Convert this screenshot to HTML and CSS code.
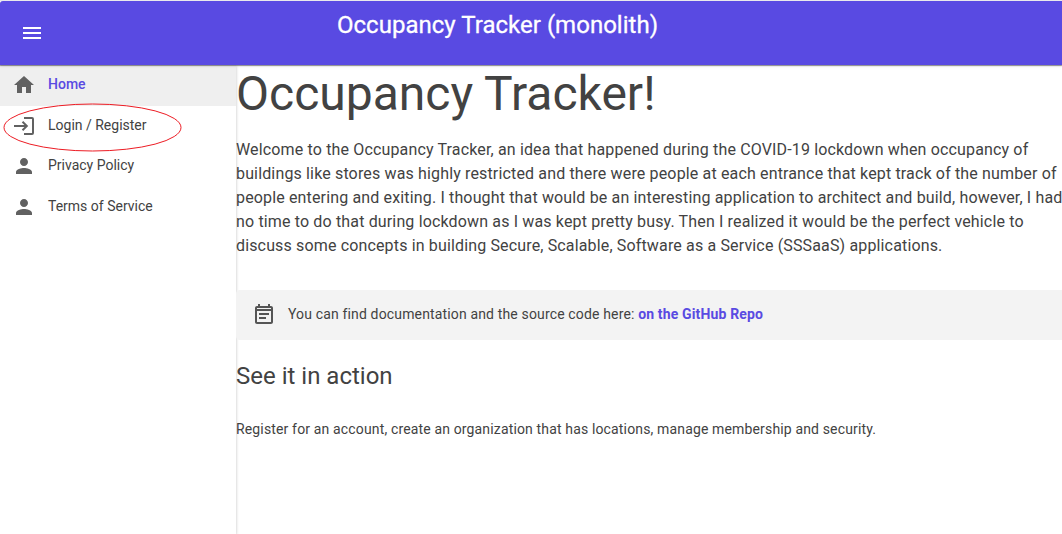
FILE: index.html
```html
<!DOCTYPE html>
<html lang="en">
<head>
<meta charset="utf-8">
<title>Occupancy Tracker</title>
<link rel="stylesheet" href="styles.css">
</head>
<body>
<header class="appbar">
  <button class="menu-button" aria-label="Menu"><svg class="icon" viewBox="0 0 24 24"><path d="M3 18h18v-2H3v2zm0-5h18v-2H3v2zm0-7v2h18V6H3z"/></svg></button>
  <div class="appbar-title">Occupancy Tracker (monolith)</div>
</header>
<div class="layout">
  <nav class="drawer">
    <a class="nav-link active"><svg class="icon" viewBox="0 0 24 24"><path d="M10 20v-6h4v6h5v-8h3L12 3 2 12h3v8z"/></svg><span>Home</span></a>
    <a class="nav-link"><svg class="icon" viewBox="0 0 24 24"><path d="M12 3h8q2 0 2 2v14q0 2-2 2h-8v-2h8V5h-8zM11.200 7l5 5-5 5-1.400-1.400L12.400 13H2v-2h10.400L9.800 8.400z"/></svg><span>Login / Register</span>
      <svg class="highlight" viewBox="0 0 180 50"><ellipse cx="89.500" cy="25.500" rx="88.500" ry="23.500"/></svg></a>
    <a class="nav-link"><svg class="icon" viewBox="0 0 24 24"><path d="M12 12c2.210 0 4-1.790 4-4s-1.790-4-4-4-4 1.790-4 4 1.790 4 4 4zm0 2c-2.670 0-8 1.340-8 4v2h16v-2c0-2.660-5.330-4-8-4z"/></svg><span>Privacy Policy</span></a>
    <a class="nav-link"><svg class="icon" viewBox="0 0 24 24"><path d="M12 12c2.210 0 4-1.790 4-4s-1.790-4-4-4-4 1.790-4 4 1.790 4 4 4zm0 2c-2.670 0-8 1.340-8 4v2h16v-2c0-2.660-5.330-4-8-4z"/></svg><span>Terms of Service</span></a>
  </nav>
  <main class="content">
    <h1 class="heading">Occupancy Tracker!</h1>
    <p class="intro">Welcome to the Occupancy Tracker, an idea that happened during the COVID-19 lockdown when occupancy of buildings like stores was highly restricted and there were people at each entrance that kept track of the number of people entering and exiting. I thought that would be an interesting application to architect and build, however, I had no time to do that during lockdown as I was kept pretty busy. Then I realized it would be the perfect vehicle to discuss some concepts in building Secure, Scalable, Software as a Service (SSSaaS) applications.</p>
    <div class="alert"><svg class="icon" viewBox="0 0 24 24"><path d="M17 10H7v2h10v-2zm2-7h-1V1h-2v2H8V1H6v2H5c-1.110 0-1.990.9-1.990 2L3 19c0 1.100.89 2 2 2h14c1.100 0 2-.9 2-2V5c0-1.100-.9-2-2-2zm0 16H5V8h14v11zm0-13H5V5h14v1zm-5 8H7v2h7v-2z"/></svg><span>You can find documentation and the source code here: <a class="link">on the GitHub Repo</a></span></div>
    <h2 class="subheading">See it in action</h2>
    <p class="note">Register for an account, create an organization that has locations, manage membership and security.</p>
  </main>
</div>
</body>
</html>
```
FILE: styles.css
```css
* { box-sizing: border-box; }
body {
  margin: 0;
  height: 534px;
  overflow: hidden;
  display: flex;
  flex-direction: column;
  border-top: 1px solid #e9e9ec;
  background: #fff;
  color: #424242;
  font-family: Roboto, sans-serif;
}
.icon { width: 24px; height: 24px; flex: none; fill: currentColor; display: block; }
.appbar {
  position: relative;
  z-index: 2;
  flex: none;
  display: flex;
  height: 64px;
  padding: 0 20px;
  background: #594ae2;
  border-top-left-radius: 3px;
  color: #fff;
  box-shadow: 0 1px 1px rgba(0,0,0,.4), 0 1px 3px rgba(0,0,0,.12);
}
.menu-button { align-self: center; padding: 0; border: 0; background: none; color: inherit; }
.appbar-title {
  margin-left: 293px;
  padding-top: 8px;
  font-size: 24px;
  line-height: 32px;
  font-weight: 400;
  letter-spacing: .02px;
  -webkit-text-stroke: .3px #fff;
  white-space: nowrap;
}
.layout { display: flex; flex: 1; min-height: 0; }
.drawer {
  width: 236px;
  flex: none;
  box-shadow: 0 1px 3px rgba(0,0,0,.25);
}
.nav-link {
  position: relative;
  display: flex;
  align-items: center;
  gap: 12px;
  height: 40.500px;
  padding: 0 12px;
  font-size: 14px;
  letter-spacing: 0;
}
.nav-link span { padding-bottom: 2px; }
.nav-link .icon { color: #616161; }
.nav-link.active { background: #efefef; }
.nav-link.active span { color: #594ae2; font-weight: 500; }
.nav-link .highlight {
  position: absolute;
  left: 3px;
  top: -4px;
  width: 180px;
  height: 50px;
  fill: none;
  stroke: #ed1c24;
  stroke-width: 1;
}
.content { flex: 1; min-width: 0; padding-top: 1px; }
.heading { margin: 0; font-size: 48px; line-height: 56px; font-weight: 400; }
.intro { margin: 16px -8px 32px 0; font-size: 16px; line-height: 24px; letter-spacing: .15px; }
.alert {
  display: flex;
  align-items: center;
  gap: 12px;
  height: 50px;
  padding: 0 16px 1px;
  border-radius: 4px 0 0 4px;
  background: #f3f3f3;
  font-size: 14px;
  letter-spacing: .15px;
}
.alert span { padding-bottom: 2px; }
.alert .icon { color: #555; }
.link { color: #594ae2; font-weight: 700; }
.subheading { margin: 20px 0 0; font-size: 24px; line-height: 32px; font-weight: 400; }
.note { margin: 27px 0 0; font-size: 14px; line-height: 20px; letter-spacing: .15px; }
```
